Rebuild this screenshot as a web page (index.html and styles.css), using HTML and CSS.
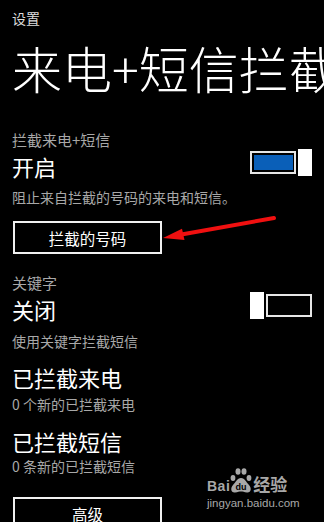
FILE: index.html
```html
<!DOCTYPE html>
<html lang="zh-CN">
<head>
<meta charset="utf-8">
<title>来电+短信拦截</title>
<link rel="stylesheet" href="styles.css">
</head>
<body>
<div class="page">
  <div class="crumb">设置</div>
  <div class="title">来电+短信拦截</div>

  <div class="label first">拦截来电+短信</div>
  <div class="row">
    <div class="value">开启</div>
    <div class="toggle on">
      <div class="track"><div class="fill"></div></div>
      <div class="thumb"></div>
    </div>
  </div>
  <div class="desc">阻止来自拦截的号码的来电和短信。</div>
  <div class="btn btn-first">拦截的号码</div>

  <div class="label second">关键字</div>
  <div class="row">
    <div class="value">关闭</div>
    <div class="toggle off">
      <div class="thumb"></div>
      <div class="track"></div>
    </div>
  </div>
  <div class="desc desc2">使用关键字拦截短信</div>

  <div class="value big1">已拦截来电</div>
  <div class="desc sub1">0 个新的已拦截来电</div>
  <div class="value big2">已拦截短信</div>
  <div class="desc sub2">0 条新的已拦截短信</div>
  <div class="btn btn-adv">高级</div>

  <svg class="arrow" width="140" height="45" viewBox="0 0 140 45">
    <line x1="124" y1="13" x2="30" y2="29.8" stroke="#f01010" stroke-width="4" stroke-linecap="round"/>
    <polygon points="13,33 32,23.8 34.5,35" fill="#f01010"/>
  </svg>

  <div class="mark">
    <div class="mark-row">
      <span class="mark-bai">Bai</span>
      <svg class="paw" width="22" height="26" viewBox="0 0 22 26">
        <ellipse cx="3" cy="11" rx="2.4" ry="3" fill="#a8a8a8"/>
        <ellipse cx="8" cy="4.5" rx="2.5" ry="3.3" fill="#a8a8a8"/>
        <ellipse cx="14" cy="4.5" rx="2.5" ry="3.3" fill="#a8a8a8"/>
        <ellipse cx="19" cy="11" rx="2.4" ry="3" fill="#a8a8a8"/>
        <path d="M11 11 C7 11 6 15 3 18 C0 21 1 26 5 25.5 C8 25 9 24.5 11 24.5 C13 24.5 14 25 17 25.5 C21 26 22 21 19 18 C16 15 15 11 11 11 Z" fill="#a8a8a8"/>
        <text x="11" y="23" text-anchor="middle" class="paw-du">du</text>
      </svg>
      <span class="mark-jy">经验</span>
    </div>
    <div class="mark-url">jingyan.baidu.com</div>
  </div>
</div>
</body>
</html>
```

FILE: styles.css
```css
html, body {
  margin: 0;
  padding: 0;
  background: #000;
  width: 324px;
  height: 522px;
  overflow: hidden;
}

.page {
  position: relative;
  padding: 0 12px;
  font-family: "Noto Sans CJK SC", "Noto Sans", sans-serif;
  color: #fff;
}

.crumb {
  padding-top: 8px;
  font-size: 14px;
  line-height: 21px;
  color: #dcdcdc;
}

.title {
  margin-top: 8px;
  font-size: 50px;
  line-height: 60px;
  font-weight: 300;
  white-space: nowrap;
  color: #fff;
}

.label {
  font-size: 15px;
  line-height: 20px;
  color: #a8a8a8;
}
.label.first { margin-top: 33px; }
.label.second { margin-top: 19px; }

.row {
  display: flex;
  justify-content: space-between;
  align-items: flex-start;
  margin-top: 2px;
}

.value {
  font-size: 22px;
  line-height: 28px;
  color: #fff;
}

.toggle {
  display: flex;
  align-items: center;
  gap: 2px;
  margin-top: -3px;
}

.track {
  box-sizing: border-box;
  width: 46px;
  height: 23px;
  border: 2px solid #e6e6e6;
  padding: 2px 1px 2px 2px;
}
.fill {
  width: 100%;
  height: 100%;
  background: #0a5fb8;
}
.thumb {
  width: 14px;
  height: 27px;
  background: #fff;
}

.desc {
  margin-top: 7px;
  font-size: 14px;
  line-height: 20px;
  color: #a8a8a8;
}
.desc2 { margin-top: 8px; }

.btn {
  box-sizing: border-box;
  width: 149px;
  height: 33px;
  margin-left: 1px;
  border: 2px solid #f0f0f0;
  display: flex;
  align-items: center;
  justify-content: center;
  font-size: 15.5px;
  color: #fff;
}
.btn-first { margin-top: 14px; }

.big1 { margin-top: 12px; }
.sub1 { margin-top: 3px; }
.big2 { margin-top: 13px; }
.sub2 { margin-top: 1px; }
.btn-adv { margin-top: 21px; align-items: flex-start; padding-top: 4px; }

.arrow {
  position: absolute;
  left: 150px;
  top: 205px;
}

.mark {
  position: absolute;
  left: 207px;
  top: 467px;
  color: #a8a8a8;
}
.mark-row {
  display: flex;
  align-items: flex-end;
  height: 26px;
}
.mark-bai {
  font-family: "Liberation Sans", Arial, sans-serif;
  font-weight: bold;
  font-size: 14px;
  line-height: 14px;
  letter-spacing: 0.5px;
}
.paw { display: block; }
.paw-du {
  font-family: "Liberation Sans", Arial, sans-serif;
  font-weight: bold;
  font-size: 9px;
  fill: #000;
}
.mark-jy {
  font-family: "Noto Sans CJK SC", sans-serif;
  font-weight: bold;
  font-size: 17px;
  line-height: 18px;
  margin-left: 1px;
}
.mark-url {
  font-family: "Liberation Sans", Arial, sans-serif;
  font-size: 11.5px;
  line-height: 14px;
  margin-top: 3px;
}
```
